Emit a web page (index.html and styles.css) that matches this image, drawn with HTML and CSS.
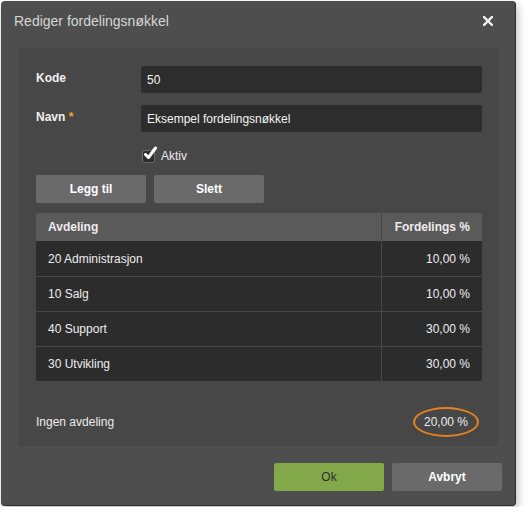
FILE: index.html
```html
<!DOCTYPE html>
<html lang="no">
<head>
    <meta charset="UTF-8">
    <meta name="viewport" content="width=device-width, initial-scale=1.0">
    <title>Rediger fordelingsnøkkel</title>
    <link rel="stylesheet" href="styles.css">
</head>
<body>
    <div class="dialog">
        <div class="dialog-header">
            <span class="dialog-title">Rediger fordelingsnøkkel</span>
            <button class="close-button" type="button" aria-label="Lukk">
                <svg width="10" height="10" viewBox="0 0 10 10">
                    <path d="M1 1 L9 9 M9 1 L1 9" stroke="#f2f2f2" stroke-width="2.4" stroke-linecap="square"/>
                </svg>
            </button>
        </div>

        <div class="panel">
            <div class="field-row">
                <label for="kode">Kode</label>
                <input type="text" id="kode" value="50">
            </div>
            <div class="field-row">
                <label for="navn">Navn <span class="required">*</span></label>
                <input type="text" id="navn" value="Eksempel fordelingsnøkkel">
            </div>
            <div class="check-row">
                <span class="checkbox">
                    <svg width="16" height="16" viewBox="0 0 16 16">
                        <path d="M3.5 8.5 L6.5 11.5 L13.5 2" fill="none" stroke="#fff" stroke-width="3" stroke-linecap="round" stroke-linejoin="round"/>
                    </svg>
                </span>
                <span class="check-label">Aktiv</span>
            </div>
            <div class="button-row">
                <button class="btn" type="button">Legg til</button>
                <button class="btn" type="button">Slett</button>
            </div>

            <table class="dist-table">
                <thead>
                    <tr>
                        <th>Avdeling</th>
                        <th class="num">Fordelings %</th>
                    </tr>
                </thead>
                <tbody>
                    <tr><td>20 Administrasjon</td><td class="num">10,00 %</td></tr>
                    <tr><td>10 Salg</td><td class="num">10,00 %</td></tr>
                    <tr><td>40 Support</td><td class="num">30,00 %</td></tr>
                    <tr><td>30 Utvikling</td><td class="num">30,00 %</td></tr>
                </tbody>
            </table>

            <div class="rest-row">
                <span>Ingen avdeling</span>
                <span class="rest-value">20,00 %</span>
            </div>
        </div>

        <div class="dialog-footer">
            <button class="btn btn-ok" type="button">Ok</button>
            <button class="btn" type="button">Avbryt</button>
        </div>
    </div>
</body>
</html>
```

FILE: styles.css
```css
body {
    font-family: "Liberation Sans", Arial, sans-serif;
    font-size: 12px;
    background-color: #fff;
    margin: 0;
    padding: 1px;
}
.dialog {
    width: 515px;
    height: 505px;
    box-sizing: border-box;
    background-color: #4e4e4e;
    border-radius: 4px;
    border-right: 1px solid #2e2e2e;
    border-bottom: 1px solid #2e2e2e;
    box-shadow: 2px 4px 8px rgba(0, 0, 0, 0.25);
    display: flex;
    flex-direction: column;
    color: #ececec;
}
.dialog-header {
    height: 47px;
    display: flex;
    align-items: center;
    justify-content: space-between;
    padding: 0 22px 0 13px;
    box-sizing: border-box;
}
.dialog-title {
    font-size: 14px;
    color: #d6d6d6;
    margin-top: -8px;
}
.close-button {
    background: none;
    border: none;
    padding: 0;
    margin-top: -8px;
    cursor: pointer;
    display: flex;
}
.panel {
    margin: 0 17px;
    background-color: #474747;
    border-radius: 2px;
    padding: 18px 16px 0 18px;
    height: 398px;
    box-sizing: border-box;
}
.field-row {
    display: flex;
    align-items: center;
    margin-bottom: 12px;
}
.field-row label {
    width: 105px;
    font-weight: bold;
    color: #f0f0f0;
    margin-top: -3px;
}
.required {
    color: #e8a33a;
}
.field-row input {
    flex: 1;
    height: 27px;
    box-sizing: border-box;
    background-color: #2d2d2d;
    border: none;
    border-radius: 2px;
    padding: 0 6px;
    color: #f4f4f4;
    font-family: inherit;
    font-size: 12px;
}
.check-row {
    display: flex;
    align-items: center;
    margin: 0 0 9px 106px;
    height: 22px;
}
.checkbox {
    position: relative;
    width: 11px;
    height: 11px;
    margin-top: 3px;
    background-color: #2d2d2d;
    border: 1px solid #6a6a6a;
    border-radius: 2px;
}
.checkbox svg {
    position: absolute;
    left: -1px;
    top: -5px;
}
.check-label {
    margin-left: 6px;
    margin-top: 2px;
    color: #eaeaea;
}
.button-row {
    display: flex;
    gap: 8px;
    margin-bottom: 10px;
}
.btn {
    width: 110px;
    height: 28px;
    background-color: #6a6a6a;
    color: #fff;
    border: none;
    border-radius: 2px;
    font-family: inherit;
    font-size: 12px;
    font-weight: bold;
    cursor: pointer;
}
.dist-table {
    width: 100%;
    border-collapse: collapse;
    border-radius: 2px;
    overflow: hidden;
}
.dist-table th {
    background-color: #5a5a5a;
    height: 28px;
    padding: 0 12px;
    text-align: left;
    font-weight: bold;
    color: #ececec;
}
.dist-table td {
    background-color: #2c2c2c;
    height: 34px;
    padding: 0 12px;
    border-top: 1px solid #474747;
    color: #eeeeee;
}
.dist-table tbody tr:first-child td {
    border-top: none;
    height: 35px;
}
.dist-table .num {
    width: 76px;
    text-align: right;
    border-left: 1px solid #474747;
}
.dist-table th.num {
    border-left: 1px solid #474747;
}
.rest-row {
    display: flex;
    align-items: center;
    justify-content: space-between;
    margin-top: 26px;
    padding-right: 3px;
}
.rest-value {
    padding: 6px 9px;
    border: 2px solid #e8821e;
    border-radius: 50%;
    color: #ececec;
}
.dialog-footer {
    display: flex;
    justify-content: flex-end;
    gap: 8px;
    padding: 17px 13px 0 0;
}
.btn-ok {
    background-color: #82a84a;
    color: #2d2d2d;
    font-weight: normal;
}
```
